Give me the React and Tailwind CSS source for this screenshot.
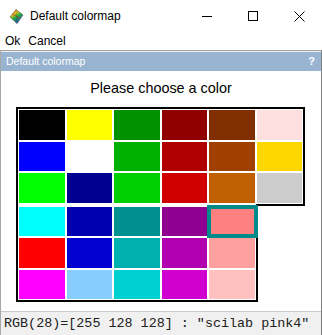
import React from "react";

const cols = [
  ["#000000", "#0000ff", "#00ff00", "#00ffff", "#ff0000", "#ff00ff"],
  ["#ffff00", "#ffffff", "#000090", "#0000b0", "#0000d0", "#87ceff"],
  ["#009000", "#00b000", "#00d000", "#009090", "#00b0b0", "#00d0d0"],
  ["#900000", "#b00000", "#d00000", "#900090", "#b000b0", "#d000d0"],
  ["#803000", "#a04000", "#c06000", "#ff8080", "#ffa0a0", "#ffc0c0"],
  ["#ffe0e0", "#ffd700", "#cccccc"],
];

function Cell({ color, selected, last }) {
  return (
    <div
      className={
        "relative w-[47.5px] h-[31.5px] p-px " +
        (last ? "border-b-2 border-black h-[33.5px]" : "")
      }
    >
      {selected ? (
        <div className="absolute -top-px -left-px -right-[2px] -bottom-px z-10 bg-[#008a8a] p-[4px]">
          <div className="w-full h-full" style={{ background: color }} />
        </div>
      ) : (
        <div className="w-full h-full" style={{ background: color }} />
      )}
    </div>
  );
}

function Icon() {
  return (
    <svg width="15" height="15" viewBox="0 0 15 15">
      <defs>
        <linearGradient id="g" x1="0" y1="0" x2="0.6" y2="1">
          <stop offset="0" stopColor="#e02020" />
          <stop offset="0.35" stopColor="#f0c020" />
          <stop offset="0.6" stopColor="#20b040" />
          <stop offset="1" stopColor="#2040d0" />
        </linearGradient>
      </defs>
      <polygon points="7,0.5 14,6 8,14.5 1,8" fill="url(#g)" stroke="#404040" strokeWidth="0.5" />
      <path d="M3.5 5 L11 9.5" stroke="#c03030" strokeWidth="0.8" />
      <path d="M7 0.5 L8 14.5" stroke="#205020" strokeWidth="0.5" opacity="0.5" />
    </svg>
  );
}

export default function App() {
  return (
    <div className="w-[322px] h-[335px] bg-white overflow-hidden font-['Liberation_Sans',Arial,sans-serif] text-black flex flex-col">
      {/* title bar */}
      <div className="h-[31px] flex items-center shrink-0">
        <div className="ml-[9px] mt-[1px]">
          <Icon />
        </div>
        <div className="ml-[6px] text-[12px] leading-none mt-[1px]">Default colormap</div>
        <div className="ml-auto flex h-full">
          <div className="w-[46px] h-full flex items-center justify-center">
            <div className="w-[10px] h-px bg-black mt-[1px]" />
          </div>
          <div className="w-[46px] h-full flex items-center justify-center">
            <div className="w-[10px] h-[10px] border border-black mt-[1px]" />
          </div>
          <div className="w-[46px] h-full flex items-center justify-center">
            <svg width="11" height="11" viewBox="0 0 11 11" className="mt-[1px]">
              <path d="M0.5 0.5 L10.5 10.5 M10.5 0.5 L0.5 10.5" stroke="#000" strokeWidth="1" />
            </svg>
          </div>
        </div>
      </div>
      {/* menu bar */}
      <div className="h-[19px] flex items-center text-[12px] leading-none shrink-0">
        <span className="ml-[5px]">Ok</span>
        <span className="ml-[8px]">Cancel</span>
      </div>
      {/* window body */}
      <div className="flex-1 flex flex-col border-l border-r border-l-[#a8a8a8] border-r-[#808080]">
        <div className="h-px bg-[#a0a0a0]" />
        <div className="h-px bg-[#f0f0f0]" />
        <div className="h-[19px] bg-[#99b4d1] flex items-center text-white text-[10.5px] leading-none shrink-0">
          <span className="ml-[5px]">Default colormap</span>
          <span className="ml-auto mr-[6px] font-bold text-[11px]">?</span>
        </div>
        <div className="flex-1 flex flex-col">
          <div className="pt-[9px] text-center text-[14.4px] leading-[17px]">Please choose a color</div>
          <div className="mt-[10px] ml-[15px] flex flex-col">
            <div className="flex border-l-2 border-t-2 border-r-2 border-black w-[289px]">
              {cols.map((c, ci) => (
                <div key={ci} className="flex flex-col">
                  {c.slice(0, 3).map((color, ri) => (
                    <Cell key={ri} color={color} last={ci === 5 && ri === 2} />
                  ))}
                </div>
              ))}
            </div>
            <div className="flex border-l-2 border-b-2 border-r-2 border-black w-[241.5px]">
              {cols.slice(0, 5).map((c, ci) => (
                <div key={ci} className="flex flex-col">
                  {c.slice(3, 6).map((color, ri) => (
                    <Cell key={ri} color={color} selected={ci === 4 && ri === 0} />
                  ))}
                </div>
              ))}
            </div>
          </div>
        </div>
        <div className="h-[24px] shrink-0 bg-[#f0f0f0] border-t border-[#c8c8c8] flex items-center">
          <span className="ml-[3px] font-['Liberation_Mono','Courier_New',monospace] text-[13.4px] leading-none whitespace-pre text-[#202020]">
            RGB(28)=[255 128 128] : "scilab pink4"
          </span>
        </div>
      </div>
    </div>
  );
}
